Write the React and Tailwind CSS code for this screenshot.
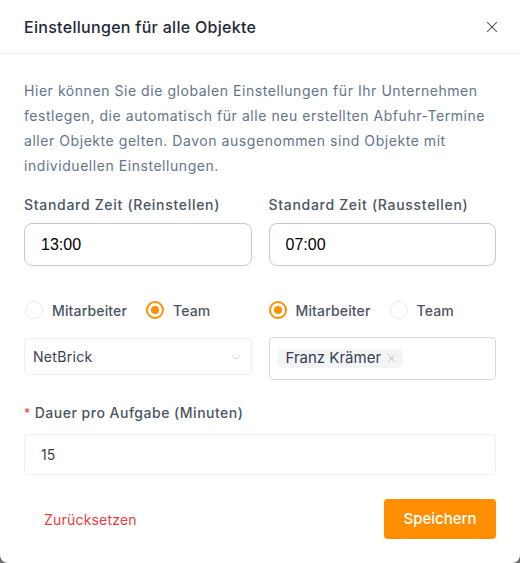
import { X, ChevronDown } from "lucide-react"

const Radio = ({ checked, label }) => (
    <label className="flex items-center gap-[9px] text-[14px] tracking-[0.15px] font-medium text-[#4b5563]">
        {checked ? (
            <span className="w-[18px] h-[18px] rounded-full border-2 border-[#ff8f00] flex items-center justify-center">
                <span className="w-2 h-2 rounded-full bg-[#ff8f00]" />
            </span>
        ) : (
            <span className="w-[18px] h-[18px] rounded-full border border-[#e6ebf1] bg-white" />
        )}
        {label}
    </label>
)

export default function App() {
    return (
        <div className="w-[520px] h-[563px] bg-[#6b6b6b] font-['Inter','Noto_Sans',sans-serif]">
            <div className="w-full h-full bg-white rounded-b-lg flex flex-col">
                {/* header */}
                <div className="flex items-center justify-between px-6 h-[54px] border-b border-[#eef0f4]">
                    <h2 className="text-[16px] tracking-[0.3px] font-medium text-[#1f2937]">Einstellungen für alle Objekte</h2>
                    <X className="w-[18px] h-[18px] text-[#374151] mr-[-5px]" strokeWidth={1.4} />
                </div>

                {/* body */}
                <div className="px-6 pt-6">
                    <p className="text-[14px] leading-[25px] tracking-[0.55px] text-[#64748b]">
                        Hier können Sie die globalen Einstellungen für Ihr Unternehmen festlegen, die automatisch für alle neu erstellten Abfuhr-Termine aller Objekte gelten. Davon ausgenommen sind Objekte mit individuellen Einstellungen.
                    </p>

                    <div className="grid grid-cols-2 gap-[17px] mt-4">
                        <div className="flex flex-col">
                            <span className="text-[14px] leading-[22px] tracking-[0.7px] font-medium text-[#4b5563]">Standard Zeit (Reinstellen)</span>
                            <div className="mt-[7px] h-[43px] rounded-lg border border-[#c8c8c8] flex items-center px-4 text-[16px] text-black font-['Liberation_Sans',Arial,sans-serif]">13:00</div>
                            <div className="flex items-center gap-[19px] mt-[33px] h-[22px] pl-px">
                                <Radio label="Mitarbeiter" />
                                <Radio checked label="Team" />
                            </div>
                            <div className="mt-[17px] h-[37px] rounded border border-[#eef0f4] flex items-center justify-between pl-2 pr-[7px] text-[14px] tracking-[0.3px] text-[#374151]">
                                NetBrick
                                <ChevronDown className="w-4 h-4 text-[#c4c8ce]" strokeWidth={1.3} />
                            </div>
                        </div>
                        <div className="flex flex-col">
                            <span className="text-[14px] leading-[22px] tracking-[0.7px] font-medium text-[#4b5563]">Standard Zeit (Rausstellen)</span>
                            <div className="mt-[7px] h-[43px] rounded-lg border border-[#c8c8c8] flex items-center px-4 text-[16px] text-black font-['Liberation_Sans',Arial,sans-serif]">07:00</div>
                            <div className="flex items-center gap-[19px] mt-[33px] h-[22px]">
                                <Radio checked label="Mitarbeiter" />
                                <Radio label="Team" />
                            </div>
                            <div className="mt-4 h-[43px] rounded-sm border border-[#d9d9d9] flex items-center px-2">
                                <span className="flex items-center gap-[5px] h-[19px] pl-2 pr-[5px] rounded bg-[#f3f4f6] text-[15px] text-[#374151]">
                                    Franz Krämer
                                    <X className="w-[11px] h-[11px] text-[#9ca3af]" strokeWidth={1.6} />
                                </span>
                            </div>
                        </div>
                    </div>

                    <div className="mt-[22px] flex items-center text-[14px] leading-[22px] tracking-[0.5px] font-medium text-[#4b5563]">
                        <span className="text-[#ef4444] mr-[4px] text-[12px]">*</span>
                        Dauer pro Aufgabe (Minuten)
                    </div>
                    <div className="mt-[10px] h-[41px] rounded border border-[#eef0f4] flex items-center px-4 text-[14px] text-[#374151]">15</div>
                </div>

                {/* footer */}
                <div className="flex items-center justify-between px-6 mt-[24px]">
                    <button className="px-5 h-[40px] text-[14px] tracking-[0.2px] text-[#e53e3e]">Zurücksetzen</button>
                    <button className="w-[112px] h-[40px] rounded bg-[#ff8f00] text-white text-[15px] font-medium">Speichern</button>
                </div>
            </div>
        </div>
    )
}
